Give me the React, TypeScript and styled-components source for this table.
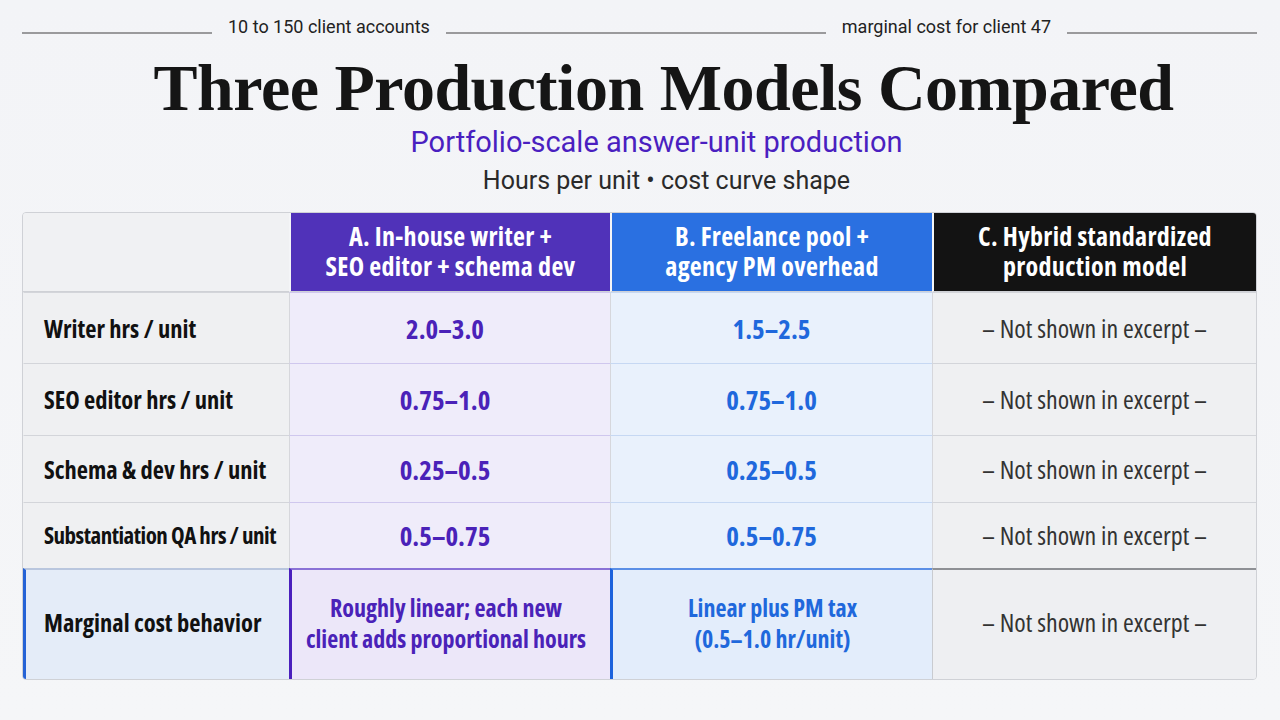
import React from "react";
import styled, { createGlobalStyle, css } from "styled-components";

const Global = createGlobalStyle`
  html, body { margin: 0; padding: 0; }
  body {
    width: 1280px;
    height: 720px;
    overflow: hidden;
    background: linear-gradient(180deg, #f3f4f7 0%, #f5f6f8 100%);
    font-family: "Open Sans", sans-serif;
    color: #111;
  }
`;

const condensed = `font-family: "Open Sans", "Noto Sans", sans-serif; font-stretch: 75%;`;

const Page = styled.div`
  width: 1280px;
  height: 720px;
  box-sizing: border-box;
  padding: 0 23px 0 22px;
  display: flex;
  flex-direction: column;
`;

const TopRule = styled.div`
  height: 52px;
  display: flex;
  align-items: center;
  gap: 16px;
`;

const Line = styled.div<{ $grow: number }>`
  flex: ${(p) => p.$grow};
  height: 2px;
  background: #9a9a9c;
  margin-top: 14px;
`;

const TopLabel = styled.span`
  font-family: "Roboto", "Noto Sans", sans-serif;
  font-size: 18px;
  color: #222;
  white-space: nowrap;
`;

const Heading = styled.div`
  padding-left: 48px;
  display: flex;
  flex-direction: column;
  align-items: center;
`;

const Title = styled.h1`
  margin: 0;
  font-family: "Liberation Serif", "DejaVu Serif", serif;
  font-weight: 700;
  font-size: 66px;
  line-height: 72px;
  letter-spacing: -0.5px;
  color: #151515;
`;

const Subtitle = styled.div`
  font-family: "Roboto", "Noto Sans", sans-serif;
  font-size: 29px;
  line-height: 36px;
  color: #4a1fc0;
  margin-right: 14px;
`;

const Caption = styled.div`
  font-family: "Roboto", "Noto Sans", sans-serif;
  font-size: 25px;
  line-height: 34px;
  color: #2a2a2a;
  margin-top: 4px;
  margin-left: 6px;
`;

const Table = styled.div`
  margin-top: 14px;
  display: grid;
  grid-template-columns: 266px 321px 322px 1fr;
  grid-template-rows: 79px 71px 72px 67px 66px 111px;
  border: 1px solid #cfd1d6;
  border-radius: 4px;
  overflow: hidden;
  background: #eff0f2;
`;

type Tone = "label" | "a" | "b" | "c";

const headBg: Record<Tone, string> = {
  label: "#f0f1f3",
  a: "#5032b9",
  b: "#2a70e1",
  c: "#131313",
};

const HeadCell = styled.div<{ $tone: Tone }>`
  background: ${(p) => headBg[p.$tone]};
  color: #fff;
  ${condensed}
  font-weight: 700;
  font-size: 26px;
  letter-spacing: 0.3px;
  line-height: 30px;
  display: flex;
  align-items: center;
  justify-content: center;
  text-align: center;
  box-sizing: border-box;
  border-left: ${(p) => (p.$tone === "label" ? "none" : "2px solid #f4f5f7")};
  border-bottom: 1px solid #cfd1d6;
  padding-bottom: 2px;
`;

const cellBg: Record<Tone, string> = {
  label: "#eff0f2",
  a: "#efecfa",
  b: "#e9f1fc",
  c: "#eff0f2",
};

const hiBg: Record<Tone, string> = {
  label: "#e4ecf8",
  a: "#ece7f9",
  b: "#e3edfb",
  c: "#eeeff2",
};

const hiTop: Record<Tone, string> = {
  label: "#b9c6de",
  a: "#8a72d6",
  b: "#5b8fe6",
  c: "#8e9095",
};

const hiLeft: Record<Tone, string> = {
  label: "#2462d6",
  a: "#4a1fbd",
  b: "#1c62dc",
  c: "#c9cbd0",
};

const cellColor: Record<Tone, string> = {
  label: "#111",
  a: "#4a22b8",
  b: "#1f68dc",
  c: "#333",
};

const lineColor: Record<Tone, string> = {
  label: "#d3d5da",
  a: "#cfc7ee",
  b: "#c6d8f3",
  c: "#d3d5da",
};

const cellSize: Record<Tone, string> = {
  label: "24.5px",
  a: "27px",
  b: "27px",
  c: "26px",
};

const Cell = styled.div<{ $tone: Tone; $hi?: boolean }>`
  background: ${(p) => (p.$hi ? hiBg[p.$tone] : cellBg[p.$tone])};
  color: ${(p) => cellColor[p.$tone]};
  ${condensed}
  font-size: ${(p) => cellSize[p.$tone]};
  font-weight: ${(p) => (p.$tone === "c" ? 400 : 700)};
  line-height: 31px;
  white-space: nowrap;
  display: flex;
  align-items: center;
  justify-content: ${(p) => (p.$tone === "label" ? "flex-start" : "center")};
  text-align: ${(p) => (p.$tone === "label" ? "left" : "center")};
  padding-left: ${(p) => (p.$tone === "label" ? "20px" : "0")};
  padding-right: ${(p) => (p.$tone === "a" ? "10px" : "0")};
  box-sizing: border-box;
  border-top: 1px solid ${(p) => lineColor[p.$tone]};
  border-left: 1px solid ${(p) => (p.$tone === "label" ? "transparent" : "#d6d7dc")};
  ${(p) =>
    p.$hi &&
    css`
      border-top: 2px solid ${hiTop[p.$tone]};
      border-left: ${p.$tone === "c" ? "1px" : "3px"} solid ${hiLeft[p.$tone]};
      padding-left: ${p.$tone === "label" ? "18px" : "0"};
      padding-bottom: 4px;
    `}
`;

const LabelText = styled.span<{ $tight?: boolean }>`
  ${(p) =>
    p.$tight &&
    css`
      font-size: 23px;
      letter-spacing: -0.5px;
    `}
`;

const CellText = styled.span`
  font-size: 24px;
  line-height: 31px;
`;

const rows: { label: string; a: string; b: string; tight?: boolean }[] = [
  { label: "Writer hrs / unit", a: "2.0–3.0", b: "1.5–2.5" },
  { label: "SEO editor hrs / unit", a: "0.75–1.0", b: "0.75–1.0" },
  { label: "Schema & dev hrs / unit", a: "0.25–0.5", b: "0.25–0.5" },
  { label: "Substantiation QA hrs / unit", a: "0.5–0.75", b: "0.5–0.75", tight: true },
];

const NOT_SHOWN = "– Not shown in excerpt –";

export default function App() {
  return (
    <>
      <Global />
      <Page>
        <TopRule>
          <Line $grow={1} />
          <TopLabel>10 to 150 client accounts</TopLabel>
          <Line $grow={2} />
          <TopLabel>marginal cost for client 47</TopLabel>
          <Line $grow={1} />
        </TopRule>
        <Heading>
          <Title>Three Production Models Compared</Title>
          <Subtitle>Portfolio-scale answer-unit production</Subtitle>
          <Caption>Hours per unit • cost curve shape</Caption>
        </Heading>
        <Table>
          <HeadCell $tone="label" />
          <HeadCell $tone="a">
            A. In-house writer +<br />
            SEO editor + schema dev
          </HeadCell>
          <HeadCell $tone="b">
            B. Freelance pool +<br />
            agency PM overhead
          </HeadCell>
          <HeadCell $tone="c">
            C. Hybrid standardized<br />
            production model
          </HeadCell>
          {rows.map((r) => (
            <React.Fragment key={r.label}>
              <Cell $tone="label">
                <LabelText $tight={r.tight}>{r.label}</LabelText>
              </Cell>
              <Cell $tone="a">{r.a}</Cell>
              <Cell $tone="b">{r.b}</Cell>
              <Cell $tone="c">{NOT_SHOWN}</Cell>
            </React.Fragment>
          ))}
          <Cell $tone="label" $hi>
            Marginal cost behavior
          </Cell>
          <Cell $tone="a" $hi>
            <CellText>
              Roughly linear; each new
              <br />
              client adds proportional hours
            </CellText>
          </Cell>
          <Cell $tone="b" $hi>
            <CellText>
              Linear plus PM tax
              <br />
              (0.5–1.0 hr/unit)
            </CellText>
          </Cell>
          <Cell $tone="c" $hi>
            {NOT_SHOWN}
          </Cell>
        </Table>
      </Page>
    </>
  );
}
